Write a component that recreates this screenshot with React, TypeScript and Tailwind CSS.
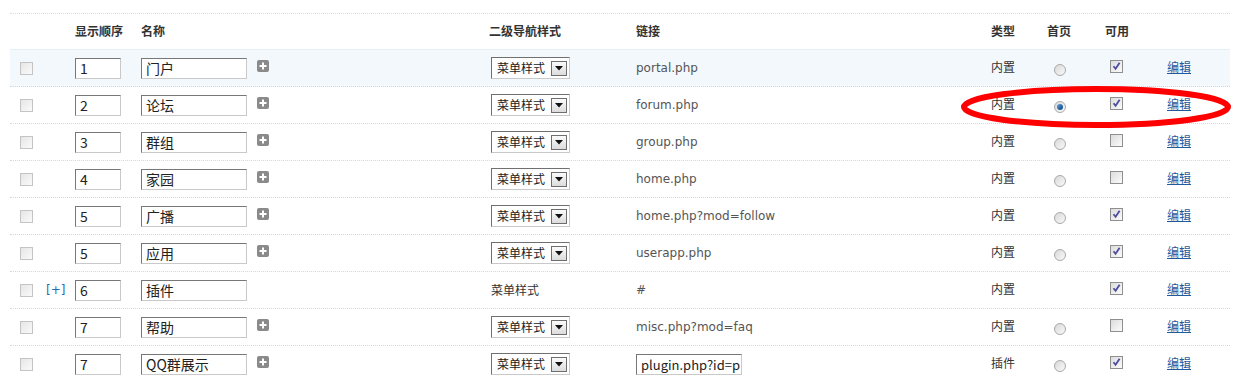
import React from "react";

type Row = {
  order: string;
  name: string;
  link: string;
  linkInput?: boolean;
  type: string;
  radio: "off" | "on" | "none";
  enabled: boolean;
  plus: boolean;
  select: boolean;
  expander?: boolean;
  hl?: boolean;
};

const rows: Row[] = [
  { order: "1", name: "门户", link: "portal.php", type: "内置", radio: "off", enabled: true, plus: true, select: true, hl: true },
  { order: "2", name: "论坛", link: "forum.php", type: "内置", radio: "on", enabled: true, plus: true, select: true },
  { order: "3", name: "群组", link: "group.php", type: "内置", radio: "off", enabled: false, plus: true, select: true },
  { order: "4", name: "家园", link: "home.php", type: "内置", radio: "off", enabled: false, plus: true, select: true },
  { order: "5", name: "广播", link: "home.php?mod=follow", type: "内置", radio: "off", enabled: true, plus: true, select: true },
  { order: "5", name: "应用", link: "userapp.php", type: "内置", radio: "off", enabled: true, plus: true, select: true },
  { order: "6", name: "插件", link: "#", type: "内置", radio: "none", enabled: true, plus: false, select: false, expander: true },
  { order: "7", name: "帮助", link: "misc.php?mod=faq", type: "内置", radio: "off", enabled: false, plus: true, select: true },
  { order: "7", name: "QQ群展示", link: "plugin.php?id=p", linkInput: true, type: "插件", radio: "off", enabled: true, plus: true, select: true },
];

const font = { fontFamily: '"DejaVu Sans", "Noto Sans CJK SC", sans-serif' };

function Box() {
  return (
    <span className="block w-[13px] h-[13px] border border-[#c4c4c4] bg-gradient-to-br from-[#e6e6e6] to-[#fafafa]" />
  );
}

function Check({ on }: { on: boolean }) {
  return (
    <span className="relative block w-[13px] h-[13px] border border-[#8f8f8f] bg-gradient-to-br from-[#dcdcdc] to-[#fbfbfb]">
      {on && (
        <svg viewBox="0 0 11 11" className="absolute left-0 top-0 w-[11px] h-[11px]">
          <path d="M2.5 5.2 L4.6 7.8 L8.6 1.8" fill="none" stroke="#4d4d9e" strokeWidth="1.8" />
        </svg>
      )}
    </span>
  );
}

function Radio({ on }: { on: boolean }) {
  return (
    <span className="flex items-center justify-center w-[12px] h-[12px] rounded-full border border-[#a9a9a9] bg-gradient-to-br from-[#d8d8d8] to-[#fafafa]">
      {on && <span className="block w-[6px] h-[6px] rounded-full bg-gradient-to-br from-[#5aa0e0] to-[#0b3f80]" />}
    </span>
  );
}

function Plus() {
  return (
    <span className="flex items-center justify-center w-[12px] h-[12px] rounded-[2px] bg-[#8a8a8a]">
      <svg viewBox="0 0 12 12" className="w-[12px] h-[12px]">
        <path d="M6 2.5 V9.5 M2.5 6 H9.5" stroke="#fff" strokeWidth="2" />
      </svg>
    </span>
  );
}

function Input({ value, w, small }: { value: string; w: string; small?: boolean }) {
  return (
    <span
      className={`block h-[21px] ${w} border border-t-[#777] border-l-[#777] border-r-[#c9c9c9] border-b-[#c9c9c9] bg-white pl-[4px] ${small ? "text-[13px]" : "text-[14px]"} leading-[19px] text-[#222] overflow-hidden whitespace-nowrap`}
      style={{ fontFamily: '"Noto Sans CJK SC", sans-serif' }}
    >
      {value}
    </span>
  );
}

function Select() {
  return (
    <span className="flex items-center h-[22px] w-[79px] border border-t-[#707070] border-l-[#707070] border-r-[#c9c9c9] border-b-[#c9c9c9] bg-white pl-[5px] pr-[2px]">
      <span
        className="text-[12px] leading-[18px] text-[#222] whitespace-nowrap"
        style={{ fontFamily: '"Noto Sans CJK SC", sans-serif' }}
      >
        菜单样式
      </span>
      <span className="ml-auto flex items-center justify-center w-[16px] h-[15px] border border-[#6e6e6e] bg-gradient-to-b from-[#fbfbfb] to-[#dcdcdc]">
        <svg viewBox="0 0 8 5" className="w-[8px] h-[5px]">
          <path d="M0 0 H8 L4 4.5 Z" fill="#111" />
        </svg>
      </span>
    </span>
  );
}

export default function App() {
  return (
    <div className="bg-white w-[1238px] h-[375px] overflow-hidden pt-[13px] text-[12px] text-[#333]" style={font}>
      <div className="relative mx-[10px] w-[1220px] border-t border-dotted border-[#d6dde2]">
        {/* header */}
        <div className="flex h-[36px] items-center border-b border-[#e3eef5] font-bold text-[#333]">
          <div className="w-[65px]" />
          <div className="w-[66px]">显示顺序</div>
          <div className="w-[348px]">名称</div>
          <div className="w-[147px]">二级导航样式</div>
          <div className="w-[355px]">链接</div>
          <div className="w-[56px]">类型</div>
          <div className="w-[58px]">首页</div>
          <div className="w-[62px]">可用</div>
        </div>
        {rows.map((r, i) => (
          <div
            key={i}
            className={`flex h-[37px] items-center border-b border-dotted border-[#d2d8dc] ${r.hl ? "bg-[#f2f8fc]" : ""}`}
          >
            <div className="w-[36px] pl-[10px]">
              <Box />
            </div>
            <div className="w-[29px] text-[#2a6ab0]">{r.expander ? "[+]" : ""}</div>
            <div className="w-[66px]">
              <Input value={r.order} w="w-[46px]" />
            </div>
            <div className="w-[348px] flex items-center">
              <Input value={r.name} w="w-[106px]" />
              {r.plus && (
                <span className="ml-[10px] -mt-[4px]">
                  <Plus />
                </span>
              )}
            </div>
            <div className="w-[147px] pl-[2px]">
              {r.select ? (
                <Select />
              ) : (
                <span className="text-[#333] whitespace-nowrap" style={{ fontFamily: '"Noto Sans CJK SC", sans-serif' }}>
                  菜单样式
                </span>
              )}
            </div>
            <div className="w-[355px] text-[#555]">
              {r.linkInput ? <Input value={r.link} w="w-[106px]" small /> : r.link}
            </div>
            <div className="w-[56px] text-[#333]">{r.type}</div>
            <div className="w-[58px] pl-[7px] pt-[4px]">{r.radio !== "none" && <Radio on={r.radio === "on"} />}</div>
            <div className="w-[62px] pl-[5px] -mt-[3px]">
              <Check on={r.enabled} />
            </div>
            <div className="text-[#1f5a9c] underline">编辑</div>
          </div>
        ))}
        <svg
          className="absolute left-[950px] top-[71px] w-[272px] h-[44px] pointer-events-none"
          viewBox="0 0 272 44"
        >
          <ellipse cx="136" cy="22" rx="132" ry="18" fill="none" stroke="#ff0000" strokeWidth="6" />
        </svg>
      </div>
    </div>
  );
}
